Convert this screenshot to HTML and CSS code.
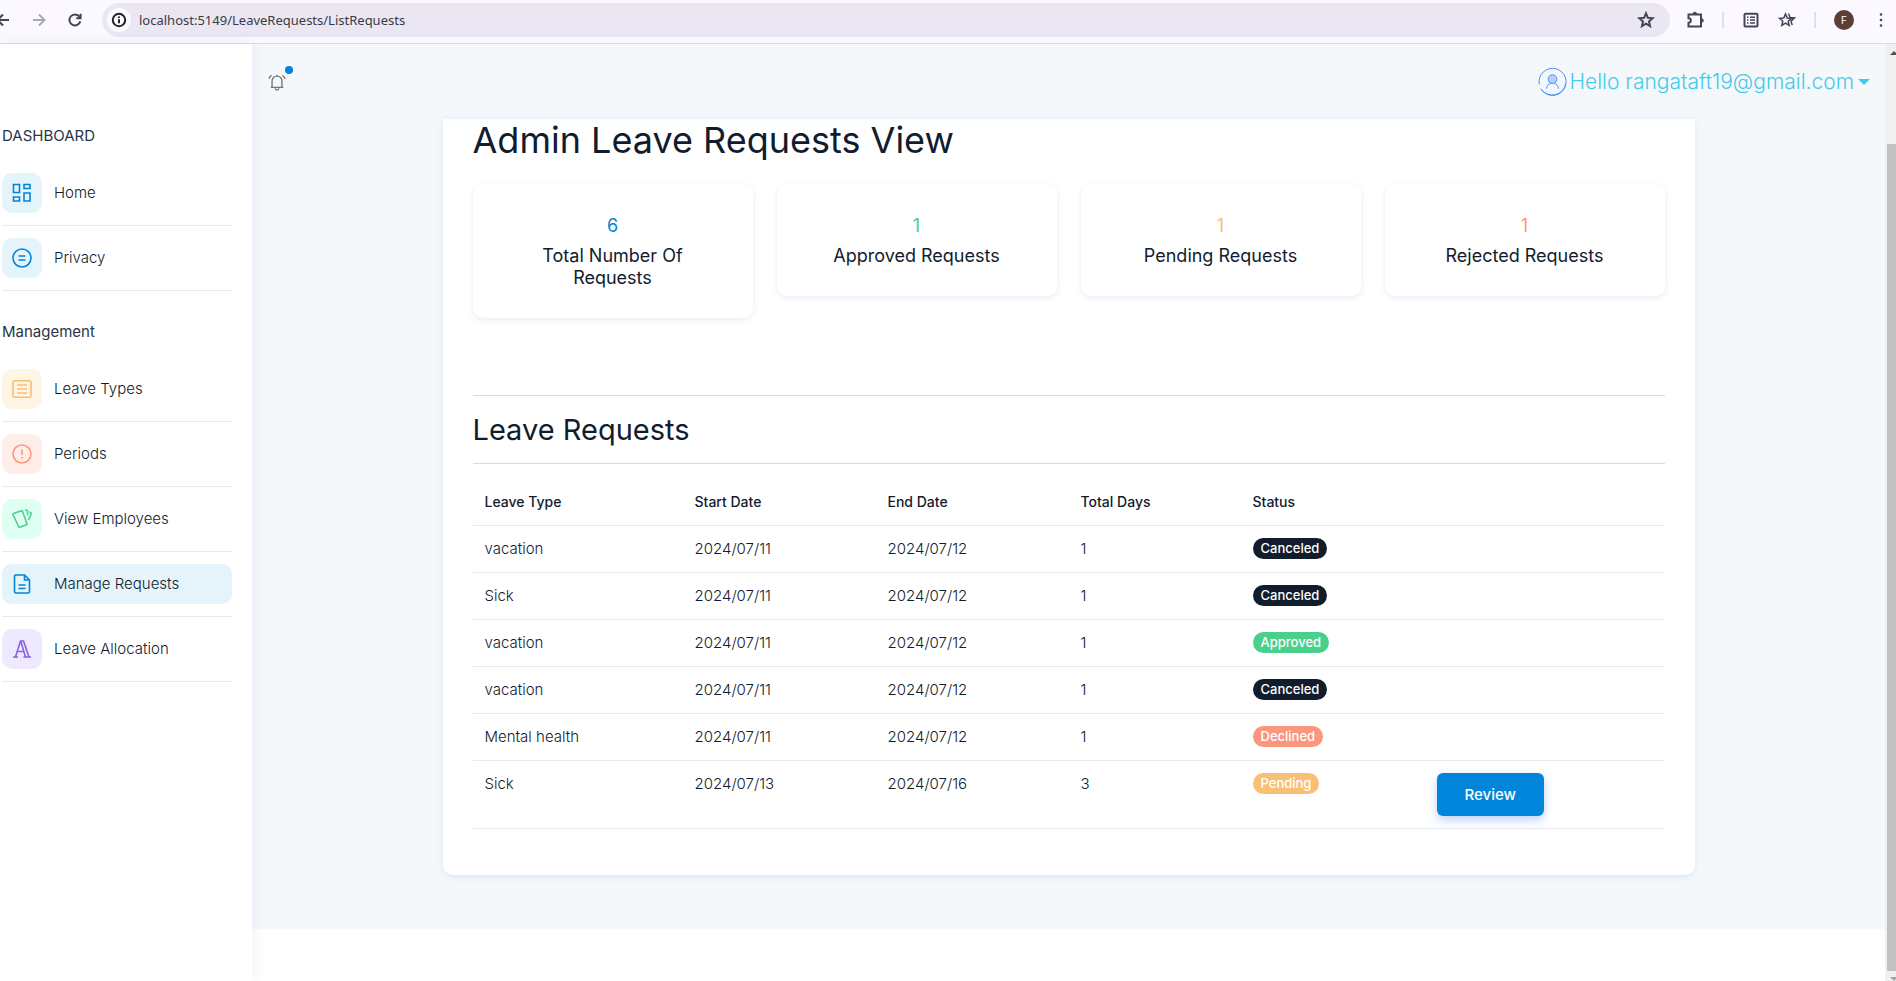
FILE: index.html
```html
<!DOCTYPE html>
<html lang="en">
<head>
<meta charset="utf-8">
<title>Admin Leave Requests View</title>
<link rel="stylesheet" href="styles.css">
</head>
<body>
<div class="window">
  <header class="browser">
    <button class="tool tool-back" aria-label="Back"><svg viewBox="0 0 16 16"><path d="M14 8H2.500M8 2.500 2.500 8 8 13.500"/></svg></button>
    <button class="tool tool-off" aria-label="Forward"><svg viewBox="0 0 16 16"><path d="M2 8h11.500M8 2.500 13.500 8 8 13.500"/></svg></button>
    <button class="tool" aria-label="Reload"><svg viewBox="0 0 16 16"><path d="M13.300 9.200A5.500 5.500 0 1 1 12.200 4.400L13.600 6M13.600 1.800V6.200H9.200"/></svg></button>
    <div class="omnibox">
      <span class="site-info"><svg viewBox="0 0 16 16"><circle cx="8" cy="8" r="6.200"/><path d="M8 7.200v4M8 4.500v1.500"/></svg></span>
      <input class="url" type="text" aria-label="Address" value="localhost:5149/LeaveRequests/ListRequests">
      <button class="tool" aria-label="Bookmark"><svg viewBox="0 0 18 18"><path d="m9 2.300 1.900 4.500 4.800.4-3.700 3.200 1.100 4.800L9 12.700l-4.100 2.500L6 10.400 2.300 7.200l4.800-.4z"/></svg></button>
    </div>
    <div class="browser-actions">
      <button class="tool" aria-label="Extensions"><svg viewBox="0 0 18 18"><path d="M2.500 3.500H15v12H2.500v-3.700a2.300 2.300 0 0 0 0-4.600z"/><path class="knob" d="M7 3a1.800 1.800 0 0 1 3.600 0zM15.500 7.700a1.800 1.800 0 0 1 0 3.600z"/></svg></button>
      <span class="divider"></span>
      <button class="tool" aria-label="Reading list"><svg viewBox="0 0 18 18"><rect x="2.500" y="2.800" width="13" height="12.600" rx="1"/><path class="thin" d="M5 6.200h1.500M5 9.100h1.500M5 12h1.500M8 6.200h5M8 9.100h5M8 12h5"/></svg></button>
      <button class="tool" aria-label="Favorites"><svg viewBox="0 0 18 18"><path class="thin" d="m7.500 3 1.600 4 4.300.4-3.200 2.800 1 4.300-3.700-2.300-3.700 2.300 1-4.300L1.500 7.400 5.800 7zM10.500 2.500 12 6.500l4.500.4-3.500 3.200 1.200 4"/></svg></button>
      <span class="divider"></span>
      <button class="avatar" aria-label="Profile">F</button>
      <button class="tool tool-menu" aria-label="Menu"><svg viewBox="0 0 18 18"><circle cx="9" cy="3.500" r="1.300"/><circle cx="9" cy="9" r="1.300"/><circle cx="9" cy="14.500" r="1.300"/></svg></button>
    </div>
  </header>

  <div class="app">
    <aside class="sidebar">
      <nav>
        <h2 class="nav-title">DASHBOARD</h2>
        <ul class="nav">
          <li><a class="nav-link blue" href="#"><span class="nav-icon"><svg viewBox="0 0 20 20"><path d="M1.500 1.500h6v8h-6zM12 1.500h6v4h-6zM1.500 14h6v4h-6zM12 10h6v8h-6z"/></svg></span>Home</a></li>
          <li><a class="nav-link blue" href="#"><span class="nav-icon"><svg viewBox="0 0 20 20"><circle cx="10" cy="10" r="9"/><path d="M6.500 8h7M6.500 12h7"/></svg></span>Privacy</a></li>
        </ul>
        <h2 class="nav-title">Management</h2>
        <ul class="nav">
          <li><a class="nav-link amber" href="#"><span class="nav-icon"><svg viewBox="0 0 20 20"><rect x="1" y="1.800" width="18" height="16.500" rx="1.500"/><path d="M5 6h10M5 10h10M5 14h10"/></svg></span>Leave Types</a></li>
          <li><a class="nav-link red" href="#"><span class="nav-icon"><svg viewBox="0 0 20 20"><circle cx="10" cy="10" r="9"/><path d="M10 5.500v5.500M10 13v1.500"/></svg></span>Periods</a></li>
          <li><a class="nav-link green" href="#"><span class="nav-icon"><svg viewBox="0 0 20 20"><path d="M1.700 4.500 9.300 1.800a1 1 0 0 1 1.300.6l4.300 12.100a1 1 0 0 1-.6 1.200L8 18.300a1 1 0 0 1-1.300-.6L1.100 5.800a1 1 0 0 1 .6-1.300zM13 1.200h1.600a1 1 0 0 1 1 1v4.300M17.500 3l1.200.6a1 1 0 0 1 .4 1.300L16.500 11"/></svg></span>View Employees</a></li>
          <li><a class="nav-link blue active" href="#" aria-current="page"><span class="nav-icon"><svg viewBox="0 0 20 20"><path d="M12.500 1H4a1.500 1.500 0 0 0-1.500 1.500v15A1.500 1.500 0 0 0 4 19h12a1.500 1.500 0 0 0 1.500-1.500V6zM12.500 1v5h5M6.500 11h7M6.500 14.500h7"/></svg></span>Manage Requests</a></li>
          <li><a class="nav-link violet" href="#"><span class="nav-icon"><svg viewBox="0 0 20 20"><path d="M1 18h5M3.500 18 8.500 2h3L17 18M9 3l4.500 15M11.500 18h7.500M5.500 12.500h6"/></svg></span>Leave Allocation</a></li>
        </ul>
      </nav>
    </aside>

    <div class="content">
      <div class="topbar">
        <button class="bell" aria-label="Notifications"><svg viewBox="0 0 20 20"><path d="M3 16h14M4.500 16V9a5.500 5.500 0 0 1 11 0v7M8 17a2 2 0 0 0 4 0M1 6.500A7 7 0 0 1 4 2.500M19 6.500a7 7 0 0 0-3-4M10 2v1.500"/></svg><span class="dot"></span></button>
        <button class="user"><svg class="user-icon" viewBox="0 0 30 30"><path d="M1.300 18A14 14 0 1 1 3 22.500M3 22.500A14 14 0 0 0 28.700 17"/><circle class="face" cx="15" cy="12.500" r="4.500"/><path d="M9 22.500c0-3 1.500-5 4-5.500M21 22.500c0-3-1.500-5-4-5.500"/></svg><span>Hello rangataft19@gmail.com</span><span class="caret"></span></button>
      </div>
      <main class="panel">
        <h1>Admin Leave Requests View</h1>
        <div class="stats">
          <div class="stat"><p class="num c-blue">6</p><p>Total Number Of Requests</p></div>
          <div class="stat"><p class="num c-green">1</p><p>Approved Requests</p></div>
          <div class="stat"><p class="num c-amber">1</p><p>Pending Requests</p></div>
          <div class="stat"><p class="num c-red">1</p><p>Rejected Requests</p></div>
        </div>
        <h2 class="section-title">Leave Requests</h2>
        <table>
          <colgroup><col class="w-type"><col class="w-date"><col class="w-date"><col class="w-days"><col class="w-status"><col></colgroup>
          <thead><tr><th>Leave Type</th><th>Start Date</th><th>End Date</th><th>Total Days</th><th>Status</th><th></th></tr></thead>
          <tbody>
            <tr><td>vacation</td><td>2024/07/11</td><td>2024/07/12</td><td>1</td><td><span class="badge">Canceled</span></td><td></td></tr>
            <tr><td>Sick</td><td>2024/07/11</td><td>2024/07/12</td><td>1</td><td><span class="badge">Canceled</span></td><td></td></tr>
            <tr><td>vacation</td><td>2024/07/11</td><td>2024/07/12</td><td>1</td><td><span class="badge approved">Approved</span></td><td></td></tr>
            <tr><td>vacation</td><td>2024/07/11</td><td>2024/07/12</td><td>1</td><td><span class="badge">Canceled</span></td><td></td></tr>
            <tr><td>Mental health</td><td>2024/07/11</td><td>2024/07/12</td><td>1</td><td><span class="badge declined">Declined</span></td><td></td></tr>
            <tr><td>Sick</td><td>2024/07/13</td><td>2024/07/16</td><td>3</td><td><span class="badge pending">Pending</span></td><td><button class="review">Review</button></td></tr>
          </tbody>
        </table>
      </main>
    </div>
    <div class="scrollbar"><span class="arrow up"></span><span class="thumb"></span><span class="arrow down"></span></div>
  </div>
</div>
</body>
</html>
```
FILE: styles.css
```css
* { box-sizing: border-box; }
body { margin: 0; font-family: Inter, "Open Sans", sans-serif; font-size: 14px; line-height: 22px; color: #111c2d; background: #fff; }
h1, h2, p, ul { margin: 0; padding: 0; font-weight: 400; }
button { font: inherit; border: 0; padding: 0; background: none; color: inherit; }
svg { fill: none; stroke: currentColor; display: block; }
.window { display: flex; flex-direction: column; height: 100vh; overflow: hidden; }

.browser { display: flex; align-items: center; height: 44px; flex: none; background: #fbf8ff; border-bottom: 1px solid #dcd9e8; color: #47445a; padding-bottom: 3px; overflow: hidden; }
.tool svg { width: 18px; height: 18px; stroke-width: 2; }
.tool .thin { stroke-width: 1.5; }
.tool .knob { fill: currentColor; stroke-width: 1; }
.browser > .tool svg { width: 16px; height: 16px; }
.browser > .tool { margin-right: 20px; }
.browser > .tool-back { margin-left: -5px; }
.browser > .tool:nth-child(3) { margin-right: 19px; }
.tool-off { color: #a9a7b2; }
.tool-menu svg { fill: currentColor; stroke: none; }
.omnibox { flex: 1; display: flex; align-items: center; height: 34px; border-radius: 17px; background: #eae7f2; padding: 0 15px 0 5px; }
.site-info { display: grid; place-items: center; width: 24px; height: 24px; border-radius: 50%; background: #fbf8ff; color: #222; }
.site-info svg { width: 16px; height: 16px; stroke-width: 2; }
.url { flex: 1; border: 0; background: none; padding: 0; margin-left: 8px; font: 13px/20px "Noto Sans", sans-serif; color: #3c3a46; outline: 0; }
.browser-actions { display: flex; align-items: center; gap: 18px; padding: 0 6px 0 16px; }
.divider { width: 2px; height: 16px; background: #e1dcf8; }
.avatar { width: 20px; height: 20px; border-radius: 50%; background: #5c4037; color: #fff; font-size: 10px; line-height: 20px; }

.app { flex: 1; display: flex; min-height: 0; }
.sidebar { width: 252px; flex: none; padding: 81px 20px 0 2px; background: #fff; z-index: 1; box-shadow: 2px 0 16px rgba(1, 41, 112, .06); }
.nav-title { font-size: 15px; line-height: 22px; font-weight: 400; color: #2a3547; }
.nav { list-style: none; padding: 14px 0 30px; }
.nav li { padding: 12px 0; border-bottom: 1px solid #e5eaef; }
.nav-link { display: flex; align-items: center; gap: 12px; font-size: 15px; font-weight: 300; text-decoration: none; color: #111c2d; border-radius: 10px; white-space: nowrap; }
.nav-icon { display: grid; place-items: center; width: 40px; height: 40px; border-radius: 10px; }
.nav-icon svg { width: 20px; height: 20px; stroke-width: 1.6; }
.blue .nav-icon { background: #e5f3fb; color: #0085db; }
.amber .nav-icon { background: #fef5e5; color: #f8c076; }
.red .nav-icon { background: #ffede9; color: #fb977d; }
.green .nav-icon { background: #dffff3; color: #4bd08b; }
.violet .nav-icon { background: #efe9ff; color: #8763da; }
.active { background: #e5f3fb; }

.content { flex: 1; min-width: 0; align-self: flex-start; background: #f4f8fb; padding-bottom: 54px; }
.topbar { display: flex; align-items: center; justify-content: space-between; height: 75px; padding: 0 15px 0 16px; }
.bell { position: relative; color: #777; }
.bell svg { width: 18px; height: 18px; stroke-width: 1.5; }
.dot { position: absolute; top: -7px; right: -7px; width: 8px; height: 8px; border-radius: 50%; background: #0085db; }
.user { display: flex; align-items: center; gap: 2px; font-size: 21px; font-weight: 300; line-height: 30px; color: #46caeb; }
.user-icon { width: 29px; height: 29px; color: #4a8cf7; }
.face { fill: #b5d1fc; }
.caret { border: 6px solid transparent; border-top-color: currentColor; border-bottom: 0; margin-left: 2px; }

.panel { max-width: 1252px; margin: 0 auto; padding: 0 30px 46px; background: #fff; border-radius: 0 0 10px 10px; box-shadow: 0 2px 6px rgba(37, 83, 185, .1); }
h1 { font-size: 36px; line-height: 42px; padding-bottom: 23px; }
.stats { display: grid; grid-template-columns: repeat(4, 1fr); gap: 24px; align-items: start; padding-bottom: 77px; }
.stat { padding: 31px 50px 29px; text-align: center; font-size: 18px; line-height: 22px; border-radius: 10px; box-shadow: 0 2px 6px rgba(37, 83, 185, .1); }
.stat .num { padding-bottom: 8px; }
.c-blue { color: #0085db; }
.c-green { color: #4bd08b; }
.c-amber { color: #f8c076; }
.c-red { color: #fb977d; }
.section-title { font-size: 29px; line-height: 36px; padding: 16px 0 15px; margin-bottom: 15px; border: 1px solid #d9dcdf; border-width: 1px 0; }
table { width: 100%; table-layout: fixed; border-collapse: collapse; }
.w-type { width: 210px; }
.w-date { width: 193px; }
.w-days { width: 172px; }
.w-status { width: 184px; }
th, td { padding: 12px; text-align: left; vertical-align: top; border-bottom: 1px solid #e5eaef; }
th { font-weight: 500; }
td { font-size: 15px; font-weight: 300; }
.badge { display: inline-block; padding: 0 8px; border-radius: 11px; background: #111c2d; color: #fff; font-size: 13px; line-height: 21px; font-weight: 500; vertical-align: top; }
.approved { background: #4bd08b; }
.declined { background: #fb977d; }
.pending { background: #f8c076; }
.review { display: block; padding: 0 28px; height: 43px; border-radius: 6px; background: #0085db; color: #fff; font-size: 15px; font-weight: 500; box-shadow: 0 4px 10px rgba(37, 110, 235, .3); }

.scrollbar { width: 11px; flex: none; background: #f0f0f0; display: flex; flex-direction: column; padding: 7px 0 0 2px; overflow: hidden; }
.thumb { flex: 1; margin: 89px 0 6px; background: #c1c1c1; }
.arrow { border: 4px solid transparent; width: 8px; margin-left: 3px; }
.up { border-bottom-color: #505050; border-top: 0; }
.down { border-top-color: #a3a3a3; border-bottom: 0; }
```
